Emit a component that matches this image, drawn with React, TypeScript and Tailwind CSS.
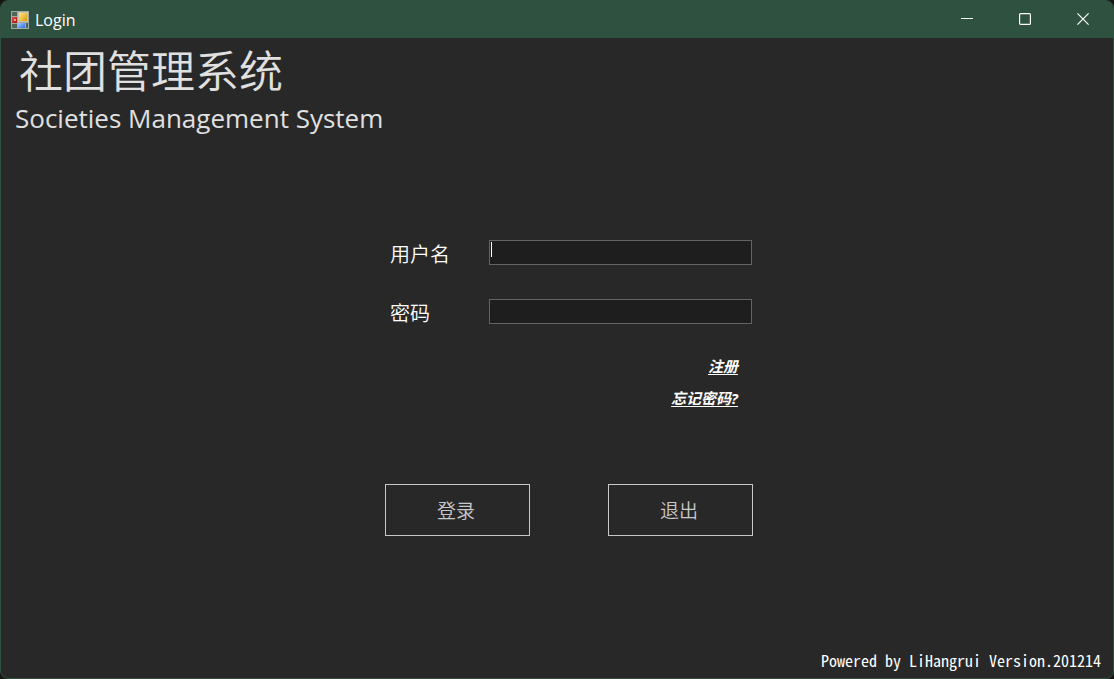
import type { ReactNode } from 'react';

function AppIcon() {
  return (
    <svg width="18" height="18" viewBox="0 0 18 18" aria-hidden="true">
      <defs>
        <linearGradient id="gold" x1="0" y1="0" x2="1" y2="1">
          <stop offset="0" stopColor="#ffe88a" />
          <stop offset="1" stopColor="#dc9a08" />
        </linearGradient>
        <linearGradient id="blue" x1="0" y1="0" x2="1" y2="1">
          <stop offset="0" stopColor="#a9cbff" />
          <stop offset="1" stopColor="#2c6ee0" />
        </linearGradient>
        <linearGradient id="red" x1="0" y1="0" x2="1" y2="1">
          <stop offset="0" stopColor="#e05a50" />
          <stop offset="1" stopColor="#9c0d0d" />
        </linearGradient>
      </defs>
      <rect width="18" height="18" fill="#a3aaa4" />
      <rect x="1" y="1" width="5" height="4" fill="#4f6558" />
      <rect x="1" y="6" width="5" height="6" fill="url(#red)" />
      <rect x="3" y="8" width="2" height="2" fill="#f09a92" />
      <rect x="1" y="13" width="5" height="4" fill="#4f6558" />
      <rect x="7" y="1" width="10" height="10" fill="#c9c4b0" />
      <rect x="8" y="2" width="8" height="8" fill="url(#gold)" />
      <rect x="7" y="12" width="7" height="5" fill="url(#blue)" />
      <rect x="15" y="12" width="2" height="5" fill="#4f6558" />
    </svg>
  );
}

function WindowButton({ label, children }: { label: string; children: ReactNode }) {
  return (
    <button
      type="button"
      aria-label={label}
      className="flex h-full w-[58px] items-center justify-center hover:bg-white/10"
    >
      <svg
        width="12"
        height="12"
        viewBox="0 0 12 12"
        fill="none"
        stroke="#ffffff"
        strokeWidth="1.2"
        aria-hidden="true"
      >
        {children}
      </svg>
    </button>
  );
}

function TitleBar() {
  return (
    <header className="flex h-[37px] items-center bg-[#2f513f] pl-[10px] pr-px">
      <AppIcon />
      <span className="ml-[6px] font-['Open_Sans','Noto_Sans',sans-serif] text-[16px] leading-5 text-white">
        Login
      </span>
      <div className="ml-auto flex h-9 self-start">
        <WindowButton label="Minimize">
          <path d="M0 5.5h12" strokeWidth="1" />
        </WindowButton>
        <WindowButton label="Maximize">
          <rect x="0.6" y="0.6" width="10.8" height="10.8" rx="1" />
        </WindowButton>
        <WindowButton label="Close">
          <path d="M0.4 0.4l11.2 11.2M11.6 0.4L0.4 11.6" />
        </WindowButton>
      </div>
    </header>
  );
}

const fieldClass =
  'block h-[25px] w-full border border-[#646464] bg-[#1e1e1e] px-[2px] text-sm text-white caret-white outline-none';
const labelClass = 'w-[104px] shrink-0 pl-[5px] pt-[2px] text-[20px] font-[350] leading-7 text-white';
const linkClass = 'text-[15px] font-bold italic leading-5 text-white underline underline-offset-2';
const buttonClass =
  'h-[52px] w-[145px] border border-[#c8c8c8] pr-[3px] pt-[2px] text-[19px] font-[350] leading-7 text-[#c8c8c8] hover:bg-white/5';

export default function App() {
  return (
    <div className="min-h-screen bg-[#141414] font-['Open_Sans','Noto_Sans_CJK_SC',sans-serif]">
      <div className="flex min-h-screen flex-col overflow-hidden rounded-lg border border-[#2f513f] bg-[#282828]">
        <TitleBar />
        <main className="flex grow flex-col">
          <div className="pl-[14px] pt-1 text-[#e0e0e0]">
            <h1 className="pl-1 font-['Noto_Sans_CJK_SC',sans-serif] text-[44px] font-[350] leading-[54px]">
              社团管理系统
            </h1>
            <p className="pt-[2px] text-[26px] leading-10">Societies Management System</p>
          </div>

          <form
            className="ml-6 mt-[101px] flex w-[368px] flex-col self-center"
            onSubmit={(e) => e.preventDefault()}
          >
            <div className="mr-px flex h-[30px] items-start">
              <label htmlFor="username" className={labelClass}>
                用户名
              </label>
              <div className="relative mt-px grow">
                <input id="username" type="text" className={`peer ${fieldClass}`} />
                <span className="pointer-events-none absolute left-[2px] top-[2px] h-[15px] w-px bg-white peer-focus:hidden" />
              </div>
            </div>
            <div className="mr-px mt-[29px] flex h-[30px] items-start">
              <label htmlFor="password" className={labelClass}>
                密码
              </label>
              <div className="mt-px grow">
                <input id="password" type="password" className={fieldClass} />
              </div>
            </div>

            <div className="mt-7 flex flex-col items-end gap-3 pr-[15px]">
              <a href="#register" className={linkClass}>
                注册
              </a>
              <a href="#forgot" className={linkClass}>
                忘记密码?
              </a>
            </div>

            <div className="mt-[76px] flex justify-between">
              <button type="submit" className={buttonClass}>
                登录
              </button>
              <button type="button" className={buttonClass}>
                退出
              </button>
            </div>
          </form>

          <footer className="mt-auto pb-2 pr-3 text-right font-['Noto_Sans_Mono_CJK_SC','Liberation_Mono',monospace] text-[16px] leading-5 text-white">
            Powered by LiHangrui Version.201214
          </footer>
        </main>
      </div>
    </div>
  );
}
